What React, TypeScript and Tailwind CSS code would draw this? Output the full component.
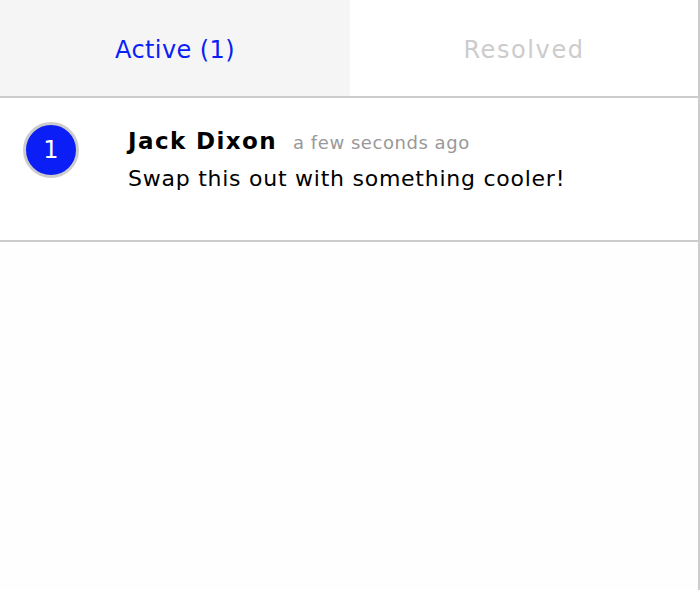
import React from "react";

export default function App() {
  return (
    <div
      className="w-[700px] h-[590px] bg-[#fefefe] border-r-2 border-[#cccccc] flex flex-col"
      style={{ fontFamily: '"DejaVu Sans", "Noto Sans", sans-serif' }}
    >
      <div className="flex h-[98px] border-b-2 border-[#cccccc] bg-white shrink-0">
        <div className="w-[350px] bg-[#f5f5f5] flex items-center justify-center pt-[3px] text-[24px] tracking-[0.4px] text-[#0a1ef5]">
          Active (1)
        </div>
        <div className="flex-1 flex items-center justify-center pt-[3px] text-[24px] tracking-[1.6px] text-[#cccccc]">
          Resolved
        </div>
      </div>
      <div className="flex h-[144px] border-b-2 border-[#cccccc] bg-white pl-[23px] pt-[24px] shrink-0">
        <div className="w-[56px] h-[56px] rounded-full border-[3px] border-[#cccccc] bg-[#0a1ef5] flex items-center justify-center text-white text-[24px] shrink-0">
          1
        </div>
        <div className="ml-[49px] flex flex-col pt-[3px]">
          <div className="flex items-baseline">
            <span className="text-[23px] font-semibold text-black leading-[32px] tracking-[1.4px]">Jack Dixon</span>
            <span className="ml-[16px] text-[18px] text-[#999999] tracking-[0.55px]">a few seconds ago</span>
          </div>
          <div className="mt-[9px] text-[22px] text-black leading-[26px] tracking-[0.75px]">
            Swap this out with something cooler!
          </div>
        </div>
      </div>
      <div className="flex-1" />
    </div>
  );
}
